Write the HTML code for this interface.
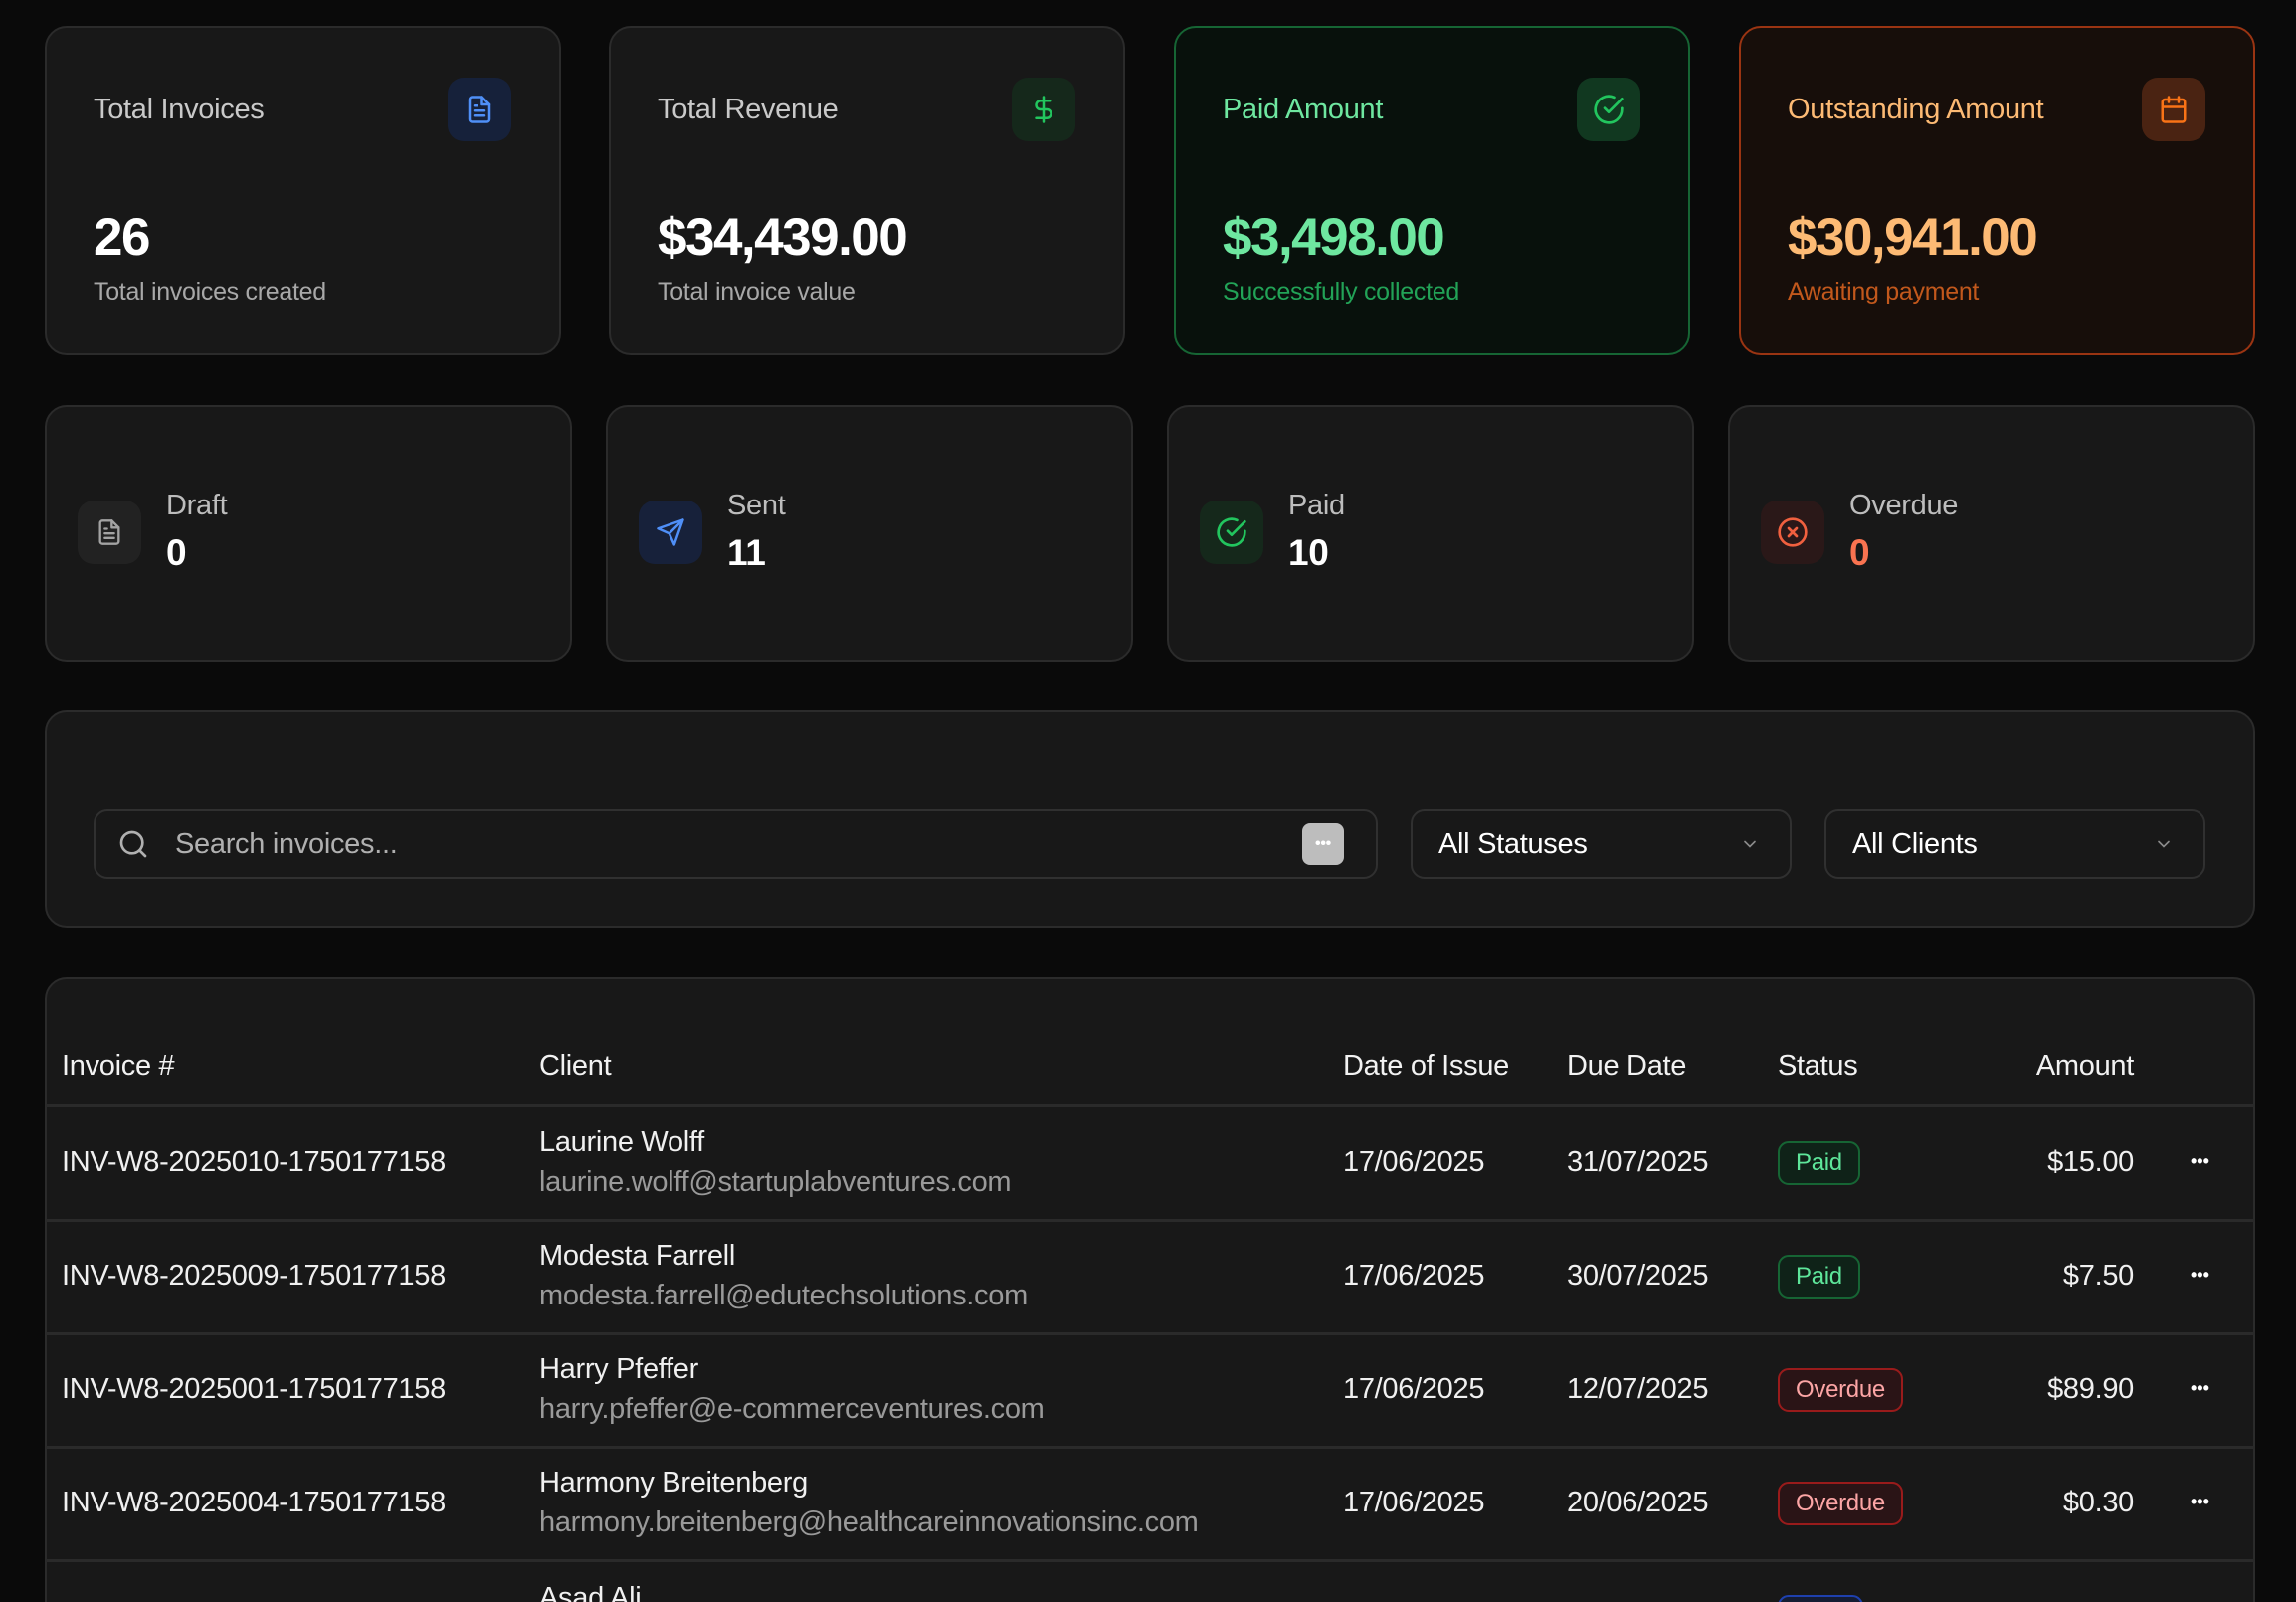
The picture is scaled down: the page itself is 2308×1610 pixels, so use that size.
<!DOCTYPE html>
<html style="width:2308px;height:1610px;overflow:hidden"><head><meta charset="utf-8"><style>
*{box-sizing:border-box;margin:0;padding:0}
body{width:2308px;height:1610px;background:#0a0a0a;font-family:"Liberation Sans",sans-serif;overflow:hidden;position:relative;color:#fff;letter-spacing:-0.3px}
.a{position:absolute}
.card{position:absolute;background:#181818;border:2px solid #2b2b2b;border-radius:22px}
.ib{position:absolute;width:64px;height:64px;border-radius:16px;display:flex;align-items:center;justify-content:center}
.t1{position:absolute;left:47px;top:66px;font-size:29px;color:#c9c9c9}
.t2{position:absolute;left:47px;top:180px;font-size:53px;font-weight:bold;letter-spacing:-1.5px}
.t3{position:absolute;left:47px;top:251px;font-size:25px;color:#a8a8a8}
.l1{position:absolute;left:120px;top:83px;font-size:29px;color:#bdbdbd}
.l2{position:absolute;left:120px;top:126px;font-size:37px;font-weight:bold}
.sel{position:absolute;top:813px;height:70px;border:2px solid #303030;border-radius:14px;background:#181818;font-size:29px;padding-left:26px;line-height:66px}
.th{position:absolute;top:1055px;font-size:29px;color:#f2f2f2}
.hl{position:absolute;left:46px;width:2221px;height:3px;background:#2a2a2a}
.c{position:absolute;font-size:29px;color:#f0f0f0;white-space:nowrap}
.em{color:#9a9a9a}
.bd{position:absolute;height:44px;border-radius:11px;font-size:24px;line-height:40px;padding:0 16px;border:2px solid}
.paid{background:#0f2218;border-color:#166534;color:#5ee69a}
.ov{background:#2a1416;border-color:#991b1b;color:#fca5a5}
.dots{position:absolute;left:2202px;font-size:18px;font-weight:bold;letter-spacing:0px}
</style></head><body>

<div class="card" style="left:45px;top:26px;width:519px;height:331px">
 <div class="t1">Total Invoices</div>
 <div class="ib" style="left:403px;top:50px;background:#16213a"><svg width="30" height="32" viewBox="0 0 24 24" fill="none" stroke="#4f8ff7" stroke-width="2" stroke-linecap="round" stroke-linejoin="round"><path d="M14 2H6a2 2 0 0 0-2 2v16a2 2 0 0 0 2 2h12a2 2 0 0 0 2-2V8z"/><path d="M14 2v6h6M16 13H8M16 17H8M10 9H8"/></svg></div>
 <div class="t2">26</div><div class="t3">Total invoices created</div>
</div>
<div class="card" style="left:612px;top:26px;width:519px;height:331px">
 <div class="t1">Total Revenue</div>
 <div class="ib" style="left:403px;top:50px;background:#15281b"><svg width="30" height="32" viewBox="0 0 24 24" fill="none" stroke="#22c55e" stroke-width="2" stroke-linecap="round"><path d="M12 2v20M17 5H9.5a3.5 3.5 0 0 0 0 7h5a3.5 3.5 0 0 1 0 7H6"/></svg></div>
 <div class="t2">$34,439.00</div><div class="t3">Total invoice value</div>
</div>
<div class="card" style="left:1180px;top:26px;width:519px;height:331px;background:#08110c;border-color:#166534">
 <div class="t1" style="color:#6ee7a0">Paid Amount</div>
 <div class="ib" style="left:403px;top:50px;background:#113820"><svg width="32" height="32" viewBox="0 0 24 24" fill="none" stroke="#22c55e" stroke-width="2" stroke-linecap="round" stroke-linejoin="round"><path d="M22 11.1V12a10 10 0 1 1-5.9-9.1"/><path d="M22 4 12 14l-3-3"/></svg></div>
 <div class="t2" style="color:#6ee7a0">$3,498.00</div><div class="t3" style="color:#22a357">Successfully collected</div>
</div>
<div class="card" style="left:1748px;top:26px;width:519px;height:331px;background:#170e0a;border-color:#9a3412">
 <div class="t1" style="color:#fdba74">Outstanding Amount</div>
 <div class="ib" style="left:403px;top:50px;background:#4a2312"><svg width="30" height="32" viewBox="0 0 24 24" fill="none" stroke="#f97316" stroke-width="2" stroke-linecap="round"><rect x="3" y="4" width="18" height="18" rx="2"/><path d="M16 2v4M8 2v4M3 10h18"/></svg></div>
 <div class="t2" style="color:#fdba74">$30,941.00</div><div class="t3" style="color:#c2581c">Awaiting payment</div>
</div>

<div class="card" style="left:45px;top:407px;width:530px;height:258px">
 <div class="ib" style="left:31px;top:94px;background:#222"><svg width="28" height="30" viewBox="0 0 24 24" fill="none" stroke="#a3a3a3" stroke-width="2" stroke-linecap="round" stroke-linejoin="round"><path d="M14 2H6a2 2 0 0 0-2 2v16a2 2 0 0 0 2 2h12a2 2 0 0 0 2-2V8z"/><path d="M14 2v6h6M16 13H8M16 17H8M10 9H8"/></svg></div>
 <div class="l1">Draft</div><div class="l2">0</div>
</div>
<div class="card" style="left:609px;top:407px;width:530px;height:258px">
 <div class="ib" style="left:31px;top:94px;background:#17213a"><svg width="30" height="30" viewBox="0 0 24 24" fill="none" stroke="#4f8ff7" stroke-width="2" stroke-linecap="round" stroke-linejoin="round"><path d="M22 2 11 13M22 2l-7 20-4-9-9-4z"/></svg></div>
 <div class="l1">Sent</div><div class="l2">11</div>
</div>
<div class="card" style="left:1173px;top:407px;width:530px;height:258px">
 <div class="ib" style="left:31px;top:94px;background:#15281b"><svg width="32" height="32" viewBox="0 0 24 24" fill="none" stroke="#22c55e" stroke-width="2" stroke-linecap="round" stroke-linejoin="round"><path d="M22 11.1V12a10 10 0 1 1-5.9-9.1"/><path d="M22 4 12 14l-3-3"/></svg></div>
 <div class="l1">Paid</div><div class="l2">10</div>
</div>
<div class="card" style="left:1737px;top:407px;width:530px;height:258px">
 <div class="ib" style="left:31px;top:94px;background:#2a1818"><svg width="32" height="32" viewBox="0 0 24 24" fill="none" stroke="#f0603f" stroke-width="2" stroke-linecap="round"><circle cx="12" cy="12" r="10"/><path d="m15 9-6 6M9 9l6 6"/></svg></div>
 <div class="l1">Overdue</div><div class="l2" style="color:#f97350">0</div>
</div>

<div class="card" style="left:45px;top:714px;width:2222px;height:219px"></div>
<div class="sel" style="left:94px;width:1291px;padding-left:80px;color:#b0b0b0">Search invoices...</div>
<svg class="a" style="left:118px;top:832px" width="32" height="32" viewBox="0 0 24 24" fill="none" stroke="#b0b0b0" stroke-width="2" stroke-linecap="round"><circle cx="11" cy="11" r="8"/><path d="m21 21-4.3-4.3"/></svg>
<div class="a" style="left:1309px;top:827px;width:42px;height:42px;border-radius:8px;background:#bdbdbd;color:#fff;font-size:16px;font-weight:bold;text-align:center;line-height:42px">•••</div>
<div class="sel" style="left:1418px;width:383px">All Statuses</div>
<div class="sel" style="left:1834px;width:383px">All Clients</div>
<svg class="a" style="left:1746px;top:838px" width="26" height="20" viewBox="0 0 24 24" fill="none" stroke="#8a8a8a" stroke-width="2" stroke-linecap="round"><path d="m6 9 6 6 6-6"/></svg>
<svg class="a" style="left:2162px;top:838px" width="26" height="20" viewBox="0 0 24 24" fill="none" stroke="#8a8a8a" stroke-width="2" stroke-linecap="round"><path d="m6 9 6 6 6-6"/></svg>

<div class="card" style="left:45px;top:982px;width:2222px;height:660px"></div>
<div class="th" style="left:62px">Invoice #</div>
<div class="th" style="left:542px">Client</div>
<div class="th" style="left:1350px">Date of Issue</div>
<div class="th" style="left:1575px">Due Date</div>
<div class="th" style="left:1787px">Status</div>
<div class="th" style="right:163px">Amount</div>
<div class="hl" style="top:1110px"></div>
<div class="hl" style="top:1225px"></div>
<div class="hl" style="top:1339px"></div>
<div class="hl" style="top:1453px"></div>
<div class="hl" style="top:1567px"></div>

<div class="c" style="left:62px;top:1152px">INV-W8-2025010-1750177158</div>
<div class="c" style="left:542px;top:1132px">Laurine Wolff</div>
<div class="c em" style="left:542px;top:1172px">laurine.wolff@startuplabventures.com</div>
<div class="c" style="left:1350px;top:1152px">17/06/2025</div>
<div class="c" style="left:1575px;top:1152px">31/07/2025</div>
<div class="bd paid" style="left:1787px;top:1147px">Paid</div>
<div class="c" style="right:163px;top:1152px">$15.00</div>
<div class="dots" style="top:1157px">•••</div>

<div class="c" style="left:62px;top:1266px">INV-W8-2025009-1750177158</div>
<div class="c" style="left:542px;top:1246px">Modesta Farrell</div>
<div class="c em" style="left:542px;top:1286px">modesta.farrell@edutechsolutions.com</div>
<div class="c" style="left:1350px;top:1266px">17/06/2025</div>
<div class="c" style="left:1575px;top:1266px">30/07/2025</div>
<div class="bd paid" style="left:1787px;top:1261px">Paid</div>
<div class="c" style="right:163px;top:1266px">$7.50</div>
<div class="dots" style="top:1271px">•••</div>

<div class="c" style="left:62px;top:1380px">INV-W8-2025001-1750177158</div>
<div class="c" style="left:542px;top:1360px">Harry Pfeffer</div>
<div class="c em" style="left:542px;top:1400px">harry.pfeffer@e-commerceventures.com</div>
<div class="c" style="left:1350px;top:1380px">17/06/2025</div>
<div class="c" style="left:1575px;top:1380px">12/07/2025</div>
<div class="bd ov" style="left:1787px;top:1375px">Overdue</div>
<div class="c" style="right:163px;top:1380px">$89.90</div>
<div class="dots" style="top:1385px">•••</div>

<div class="c" style="left:62px;top:1494px">INV-W8-2025004-1750177158</div>
<div class="c" style="left:542px;top:1474px">Harmony Breitenberg</div>
<div class="c em" style="left:542px;top:1514px">harmony.breitenberg@healthcareinnovationsinc.com</div>
<div class="c" style="left:1350px;top:1494px">17/06/2025</div>
<div class="c" style="left:1575px;top:1494px">20/06/2025</div>
<div class="bd ov" style="left:1787px;top:1489px">Overdue</div>
<div class="c" style="right:163px;top:1494px">$0.30</div>
<div class="dots" style="top:1499px">•••</div>

<div class="c" style="left:542px;top:1590px">Asad Ali</div>
<div class="bd" style="left:1787px;top:1603px;width:86px;border-color:#1e40af;background:#141c33"></div>
</body></html>
